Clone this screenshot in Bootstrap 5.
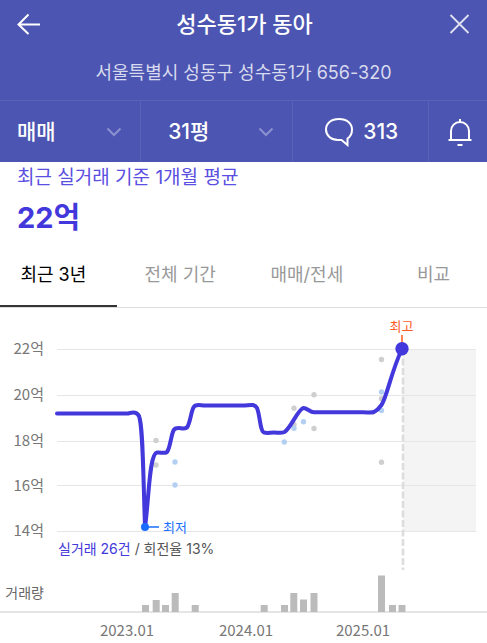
<!DOCTYPE html>
<html lang="ko">
<head>
<meta charset="utf-8">
<meta name="viewport" content="width=device-width, initial-scale=1">
<title>성수동1가 동아</title>
<link href="https://cdn.jsdelivr.net/npm/bootstrap@5.3.0/dist/css/bootstrap.min.css" rel="stylesheet">
<style>
  body { font-family: Inter, "Noto Sans CJK KR", sans-serif; overflow-x: hidden; }
  .app-head { background: #4c55b1; }
  .head-row { height: 47px; padding: 0 17px; }
  .head-row .btn, .filter-row .btn { line-height: 1; }
  .apt-name { font-size: 22px; line-height: 30px; font-weight: 500; }
  .apt-addr { font-size: 18px; line-height: 24px; padding: 14px 0 15px; color: #d8daee; }
  .filter-row { height: 62px; border-top: 1px solid #5a62b8; }
  .filter-cell { position: relative; font-size: 21px; font-weight: 500; }
  .filter-cell + .filter-cell { border-left: 1px solid #5a62b8; }
  .cell-deal { flex: 141 1 0; }
  .cell-size { flex: 152 1 0; }
  .cell-talk { flex: 136 1 0; }
  .cell-bell { flex: 58 1 0; }
  .filter-cell select { appearance: none; background: transparent; color: #fff; font-weight: 500; line-height: 30px; padding: 0 17px; }
  .cell-size select { padding-left: 27px; }
  .filter-cell select option { color: #222; }
  .talk-count { font-size: 21px; font-weight: 500; }
  .chevron { position: absolute; right: 18px; top: 26px; pointer-events: none; }
  .avg-box { padding: 3px 17px 0; }
  .avg-label { font-size: 19px; line-height: 26px; color: #5a4fe0; }
  .avg-price { font-size: 29px; line-height: 40px; font-weight: 700; color: #4338db; padding-top: 7px; }
  .tab-clip { overflow: hidden; margin-top: 4px; }
  .period-tabs { margin: 0 -10px; border-bottom: 1px solid #ddd; }
  .period-tabs .nav-link { background: transparent; color: #999; font-size: 18px; line-height: 24px; padding: 21px 0 18px; border: 0; border-bottom: 2px solid transparent; }
  .period-tabs .nav-link.active { color: #000; border-bottom-color: #333; }
  .axis-text { font-family: "Noto Sans CJK KR", sans-serif; font-size: 15px; fill: #777; }
  .note-text { font-size: 13px; }
  .sum-text { font-size: 14px; fill: #555; }
  .vol-text { font-size: 14px; fill: #666; }
</style>
<script src="https://cdn.jsdelivr.net/npm/bootstrap@5.3.0/dist/js/bootstrap.bundle.min.js"></script>
</head>
<body class="bg-white">
<header class="app-head text-white">
  <div class="head-row d-flex align-items-center justify-content-between">
    <button type="button" class="btn p-0 border-0" aria-label="뒤로">
      <svg class="d-block" width="23" height="22" viewBox="0 0 23 22" fill="none" stroke="#fff" stroke-width="2"><path d="M23 11.500H1.500M11.500 1.500l-10 10 10 9.500"/></svg>
    </button>
    <h1 class="apt-name mb-0">성수동1가 동아</h1>
    <button type="button" class="btn p-0 border-0" aria-label="닫기">
      <svg class="d-block" width="21" height="20" viewBox="0 0 21 20" fill="none" stroke="#e0e2f2" stroke-width="1.800"><path d="m1.500 1 18 18M19.500 1l-18 18"/></svg>
    </button>
  </div>
  <p class="apt-addr text-center mb-0">서울특별시 성동구 성수동1가 656-320</p>
  <div class="filter-row d-flex">
    <div class="filter-cell cell-deal">
      <select class="w-100 h-100 border-0" aria-label="거래 유형"><option>매매</option><option>전세</option></select>
      <svg class="chevron" width="16" height="10" viewBox="0 0 16 10" fill="none" stroke="#8b91d0" stroke-width="2"><path d="m1.500 1.500 6.500 6.500 6.500-6.500"/></svg>
    </div>
    <div class="filter-cell cell-size">
      <select class="w-100 h-100 border-0" aria-label="평형"><option>31평</option></select>
      <svg class="chevron" width="16" height="10" viewBox="0 0 16 10" fill="none" stroke="#8b91d0" stroke-width="2"><path d="m1.500 1.500 6.500 6.500 6.500-6.500"/></svg>
    </div>
    <div class="filter-cell cell-talk">
      <button type="button" class="btn w-100 h-100 p-0 border-0 text-white d-flex align-items-center justify-content-center">
        <svg class="me-2" width="32" height="30" viewBox="0 0 32 30" fill="none" stroke="#fff" stroke-width="2"><path d="M16 2C8 2 3 6.500 3 12.500S8 23 15 23h3.500l6 5v-6.500c3-1.800 4.500-5 4.500-9C29 6.500 24 2 16 2Z"/></svg>
        <span class="talk-count">313</span>
      </button>
    </div>
    <div class="filter-cell cell-bell">
      <button type="button" class="btn w-100 h-100 p-0 border-0 d-flex align-items-center justify-content-center" aria-label="알림">
        <svg class="ms-1" width="24" height="28" viewBox="0 0 24 28" fill="none" stroke="#fff" stroke-width="2"><path d="M12 1v3M3 21V13a9 9 0 0 1 18 0v8M.500 22h23M9.500 27h5"/></svg>
      </button>
    </div>
  </div>
</header>
<main>
  <section class="avg-box">
    <div class="avg-label">최근 실거래 기준 1개월 평균</div>
    <div class="avg-price">22억</div>
  </section>
  <div class="tab-clip">
    <ul class="nav nav-justified flex-nowrap period-tabs" role="tablist">
      <li class="nav-item" role="presentation"><button type="button" role="tab" class="nav-link active" aria-selected="true">최근 3년</button></li>
      <li class="nav-item" role="presentation"><button type="button" role="tab" class="nav-link">전체 기간</button></li>
      <li class="nav-item" role="presentation"><button type="button" role="tab" class="nav-link">매매/전세</button></li>
      <li class="nav-item" role="presentation"><button type="button" role="tab" class="nav-link">비교</button></li>
    </ul>
  </div>
  <svg class="d-block w-100" viewBox="0 308 487 335" role="img" aria-label="실거래가 추이">
    <rect x="403" y="349" width="73" height="182" fill="#f4f4f4"/>
    <path d="M57 349.500H476M57 395.500H476M57 441.500H476M57 485.500H476M57 531.500H476" stroke="#e6e6e6"/>
    <path d="M403 349V570" stroke="#ddd" stroke-width="2.600" stroke-dasharray="7 2.500"/>
    <g class="axis-text" text-anchor="end">
      <text x="44" y="354">22억</text><text x="44" y="400">20억</text><text x="44" y="446">18억</text><text x="44" y="491">16억</text><text x="44" y="536">14억</text>
    </g>
    <g fill="#cfcfcf">
      <circle cx="156" cy="440.500" r="2.700"/><circle cx="156" cy="465" r="2.700"/><circle cx="381.500" cy="359.500" r="2.700"/><circle cx="314" cy="394.700" r="2.700"/><circle cx="294" cy="408.300" r="2.700"/><circle cx="381.500" cy="398.700" r="2.700"/><circle cx="294" cy="424.500" r="2.700"/><circle cx="314" cy="428.500" r="2.700"/><circle cx="381.500" cy="462.300" r="2.700"/>
    </g>
    <g fill="#b3d0f3">
      <circle cx="175" cy="462" r="2.700"/><circle cx="175" cy="485" r="2.700"/><circle cx="381.500" cy="392" r="2.700"/><circle cx="381.500" cy="410.500" r="2.700"/><circle cx="303.500" cy="421.700" r="2.700"/><circle cx="294" cy="428.300" r="2.700"/><circle cx="284.300" cy="442" r="2.700"/>
    </g>
    <path d="M57 413.500H128C134 412 137 412 139 416C143 426 143 470 145 527C149 500 149 454 157 452.500C161 452 164 454 167 452C171 447 171 430 175.500 428.500C180 427 183 430 187 427.500C191 422 191 407 195.500 405.500C199 404.500 201 405.500 205 405.500H243C249 405.500 254 403 257 408C260 415 260 431 264 432.500C268 433.500 270 432.500 274 432.500C278 432.500 281 433.500 284.500 432C291 428 298 409 303.500 408C307 408 310 412.300 314 412.300H363C368 412.300 371 413 374 412C377 410.500 379 408.500 381.500 405C387 397 391 372 402 349" fill="none" stroke="#4338db" stroke-width="4" stroke-linecap="round" stroke-linejoin="round"/>
    <path d="M402 335v9" stroke="#ff5a1f" stroke-width="1.500"/>
    <circle cx="402" cy="348.700" r="6.700" fill="#4338db"/>
    <path d="M145 527h14" stroke="#1a6dff" stroke-width="1.500"/>
    <circle cx="145" cy="527" r="4" fill="#1a6dff"/>
    <text class="note-text" x="401.500" y="331" text-anchor="middle" fill="#ff5a1f">최고</text>
    <text class="note-text" x="163" y="532" fill="#1a6dff">최저</text>
    <text class="sum-text" x="58" y="554"><tspan fill="#4338db">실거래 26건</tspan> / 회전율 13%</text>
    <text class="vol-text" x="44" y="598" text-anchor="end">거래량</text>
    <path d="M0 612H487" stroke="#e5e5e5" stroke-width="2"/>
    <path d="M142 605h7v7h-7zM152.700 600h7v12h-7zM162 605h7v7h-7zM171.700 593h7v19h-7zM191.700 605h7v7h-7zM260.700 605h7v7h-7zM281 605h7v7h-7zM290.300 593h7v19h-7zM300 599.500h7v12.500h-7zM310.500 593h7v19h-7zM378 575.500h7v36.500h-7zM389 605h7v7h-7zM398.500 605h7v7h-7z" fill="#bbb"/>
    <g class="axis-text" text-anchor="middle">
      <text x="127" y="636">2023.01</text><text x="246" y="636">2024.01</text><text x="363" y="636">2025.01</text>
    </g>
  </svg>
</main>
</body>
</html>
